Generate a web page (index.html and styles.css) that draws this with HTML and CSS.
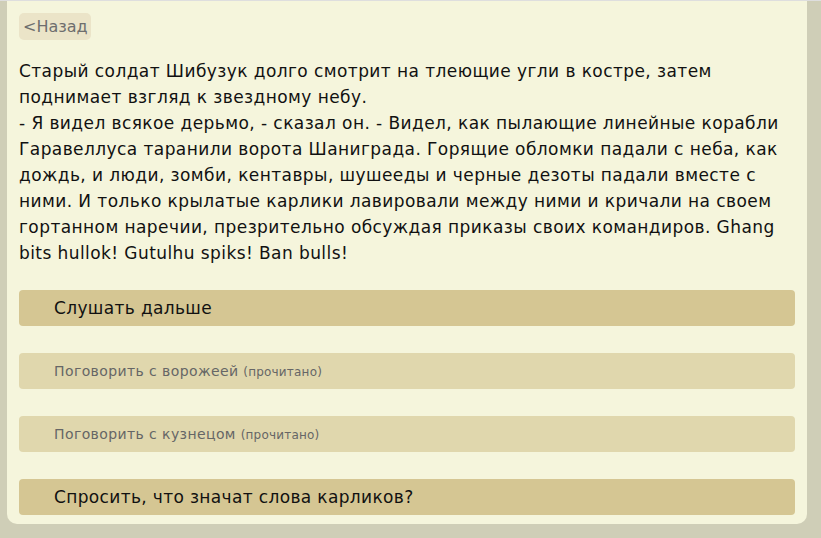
FILE: index.html
```html
<!DOCTYPE html>
<html lang="ru">
<head>
<meta charset="utf-8">
<title>Шибузук</title>
<link rel="stylesheet" href="styles.css">
</head>
<body>
<div class="panel">
  <div class="back-row"><a class="back">&lt;Назад</a></div>
  <p class="story">Старый солдат Шибузук долго смотрит на тлеющие угли в костре, затем поднимает взгляд к звездному небу.<br>- Я видел всякое дерьмо, - сказал он. - Видел, как пылающие линейные корабли Гаравеллуса таранили ворота Шаниграда. Горящие обломки падали с неба, как дождь, и люди, зомби, кентавры, шушееды и черные дезоты падали вместе с ними. И только крылатые карлики лавировали между ними и кричали на своем гортанном наречии, презрительно обсуждая приказы своих командиров. Ghang bits hullok! Gutulhu spiks! Ban bulls!</p>
  <div class="choices">
    <div class="choice">Слушать дальше</div>
    <div class="choice read">Поговорить с ворожеей <span class="tag">(прочитано)</span></div>
    <div class="choice read">Поговорить с кузнецом <span class="tag">(прочитано)</span></div>
    <div class="choice">Спросить, что значат слова карликов?</div>
  </div>
</div>
</body>
</html>
```

FILE: styles.css
```css
html, body {
  margin: 0;
  padding: 0;
}
body {
  background: #cfceb7;
  border-top: 1px solid #dedede;
  font-family: "DejaVu Sans", Verdana, sans-serif;
  color: #111;
}
.panel {
  width: 776px;
  margin-left: 7px;
  padding: 12px 12px 9px 12px;
  background: #f5f5dc;
  border-radius: 0 0 10px 10px;
}
.back-row {
  display: flex;
}
.back {
  display: block;
  height: 27px;
  line-height: 28px;
  padding: 0 3px 0 4px;
  font-size: 16px;
  color: #6e6e6e;
  background: #ebe4c8;
  border-radius: 5px;
}
.story {
  margin: 18px 0 0 0;
  font-size: 17px;
  letter-spacing: 0.42px;
  line-height: 26px;
  color: #111;
}
.choices {
  display: flex;
  flex-direction: column;
  gap: 27px;
  margin-top: 24px;
}
.choice {
  height: 36px;
  line-height: 37px;
  padding-left: 35px;
  border-radius: 4px;
  background: #d5c693;
  font-size: 17px;
  letter-spacing: 0.35px;
  color: #111;
}
.choice.read {
  background: #e0d7ad;
  font-size: 14px;
  letter-spacing: 0.4px;
  color: #666;
}
.tag {
  font-size: 12px;
  letter-spacing: 0.2px;
}
```
